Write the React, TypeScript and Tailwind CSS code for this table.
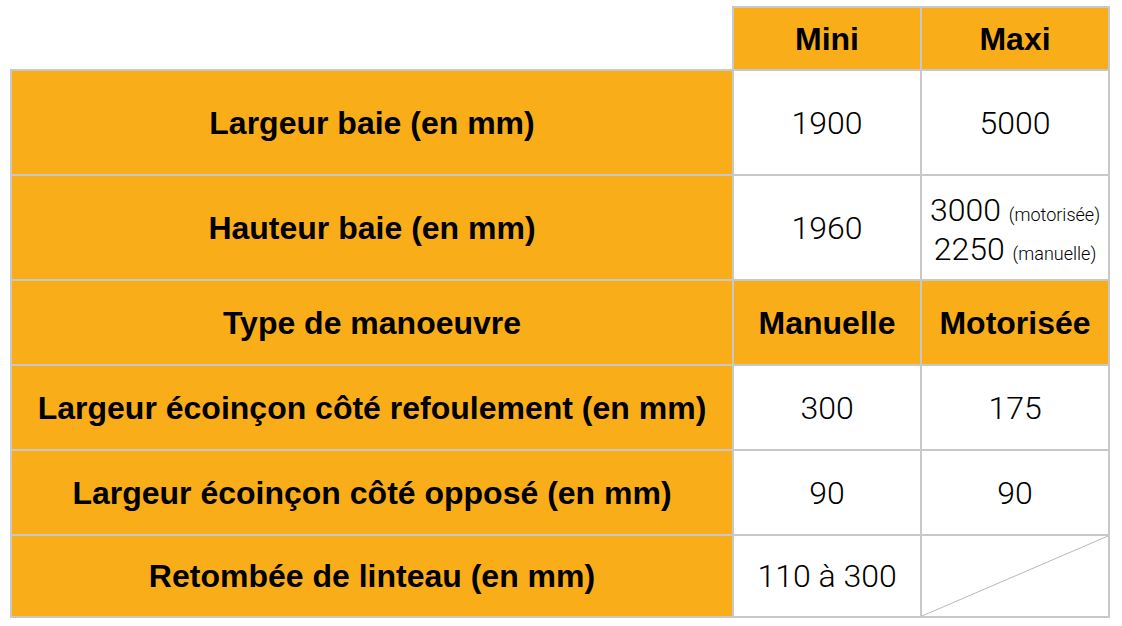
import React from "react";

const B = "border-2 border-[#c8c8c8]";
const label = `${B} bg-[#f9ae19] text-center align-middle font-bold text-[32px] p-0`;
const val = `${B} bg-white text-center align-middle font-light text-[32px] p-0 font-[Roboto,'Liberation_Sans',sans-serif]`;
const valOrange = `${B} bg-[#f9ae19] text-center align-middle font-bold text-[32px] p-0`;

export default function App() {
  return (
    <div
      className="w-[1122px] h-[626px] bg-white pl-[10px] pt-[6px] text-black"
      style={{ fontFamily: '"Liberation Sans", Arial, sans-serif' }}
    >
      <table className="border-collapse table-fixed w-[1100px] leading-none">
        <colgroup>
          <col className="w-[722px]" />
          <col className="w-[188px]" />
          <col className="w-[188px]" />
        </colgroup>
        <tbody>
          <tr className="h-[63px]">
            <td className="p-0 border-0"></td>
            <td className={valOrange}>Mini</td>
            <td className={valOrange}>Maxi</td>
          </tr>
          <tr className="h-[105px]">
            <td className={label}>Largeur baie (en mm)</td>
            <td className={val}>1900</td>
            <td className={val}>5000</td>
          </tr>
          <tr className="h-[105px]">
            <td className={label}>Hauteur baie (en mm)</td>
            <td className={val}>1960</td>
            <td className={val}>
              <div className="flex flex-col items-center leading-[35px] pt-[8px]">
                <div className="whitespace-nowrap">
                  3000 <span className="text-[18px]">(motorisée)</span>
                </div>
                <div className="whitespace-nowrap">
                  2250 <span className="text-[18px]">(manuelle)</span>
                </div>
              </div>
            </td>
          </tr>
          <tr className="h-[85px]">
            <td className={label}>Type de manoeuvre</td>
            <td className={valOrange}>Manuelle</td>
            <td className={valOrange}>Motorisée</td>
          </tr>
          <tr className="h-[85px]">
            <td className={label}>Largeur écoinçon côté refoulement (en mm)</td>
            <td className={val}>300</td>
            <td className={val}>175</td>
          </tr>
          <tr className="h-[85px]">
            <td className={label}>Largeur écoinçon côté opposé (en mm)</td>
            <td className={val}>90</td>
            <td className={val}>90</td>
          </tr>
          <tr className="h-[82px]">
            <td className={label}>Retombée de linteau (en mm)</td>
            <td className={val}>110 à 300</td>
            <td className={`${val} relative`}>
              <svg
                className="absolute inset-0 w-full h-full"
                viewBox="0 0 100 100"
                preserveAspectRatio="none"
              >
                <line
                  x1="0"
                  y1="100"
                  x2="100"
                  y2="0"
                  stroke="#b8b8b8"
                  strokeWidth="1"
                  vectorEffect="non-scaling-stroke"
                />
              </svg>
            </td>
          </tr>
        </tbody>
      </table>
    </div>
  );
}
